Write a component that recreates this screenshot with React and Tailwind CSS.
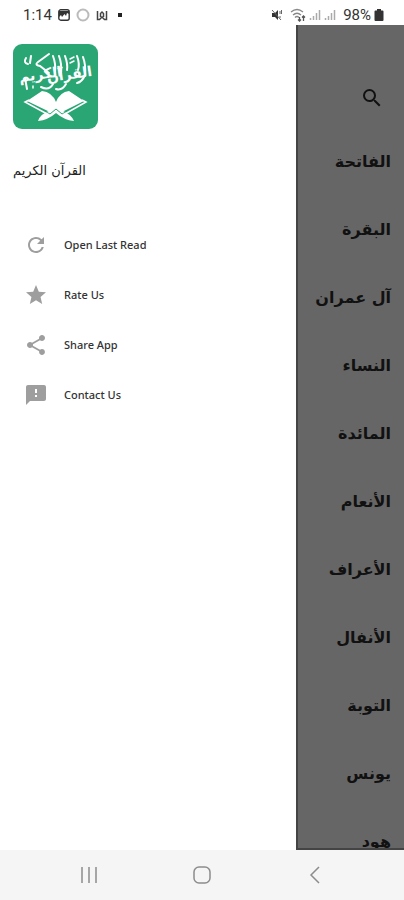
import { MdRefresh, MdStar, MdShare, MdFeedback, MdSearch } from "react-icons/md";

const menu = [
  { label: "Open Last Read", Icon: MdRefresh },
  { label: "Rate Us", Icon: MdStar },
  { label: "Share App", Icon: MdShare },
  { label: "Contact Us", Icon: MdFeedback },
];

const surahs = [
  "الفاتحة",
  "البقرة",
  "آل عمران",
  "النساء",
  "المائدة",
  "الأنعام",
  "الأعراف",
  "الأنفال",
  "التوبة",
  "يونس",
  "هود",
];

function StatusBar() {
  return (
    <header className="flex h-[25px] shrink-0 items-center justify-between bg-white pt-1 pr-5 pl-[23px] text-[#333]">
      <div className="flex items-center gap-[6px]">
        <span className="font-['Roboto'] text-[15px] leading-5">1:14</span>
        <svg className="h-3 w-3" viewBox="0 0 12 12">
          <rect x="0.8" y="0.8" width="10.4" height="10.4" rx="2" fill="none" stroke="#333" strokeWidth="1.4" />
          <path d="M1 2h10v3L9 4 8 7 6.500 5 4 8 3 6 1 8z" fill="#333" />
        </svg>
        <svg className="h-[14px] w-[14px]" viewBox="0 0 14 14">
          <circle cx="7" cy="7" r="5.5" fill="none" stroke="#bbb" strokeWidth="2" />
        </svg>
        <svg className="h-3 w-3" viewBox="0 0 12 12" fill="none" stroke="#444" strokeWidth="1.5">
          <path d="M1.500 2v8.500h2L6 8l2.500 2.500h2V2M4.500 8V4.500L6 3l1.500 1.500V8" />
        </svg>
        <span className="ml-1 h-1 w-1 bg-[#222]" />
      </div>
      <div className="flex items-center gap-[3px]">
        <svg className="h-3 w-3" viewBox="0 0 12 12">
          <path d="M1 4h3l3-3v10L4 8H1z" fill="#333" />
          <path d="M1 1l9 10M9 2v3M10.500 1v4M9 7v2" stroke="#666" fill="none" />
        </svg>
        <svg className="ml-1 h-[14px] w-4" viewBox="0 0 16 14" fill="none" stroke="#888" strokeWidth="1.3">
          <path d="M1 4q6-5 12 0M3 7q4-3.500 8 0M5 9.500q2-2 4 0" />
          <path d="M9.500 9v4M8 11.500l1.500 1.500 1.500-1.500M13.500 13V8M12 9.500L13.500 8 15 9.500" stroke="#555" />
        </svg>
        <svg className="h-3 w-3" viewBox="0 0 12 12" fill="none" stroke="#aaa" strokeWidth="1.500">
          <path d="M1.500 11V9M4.500 11V7M7.500 11V4M10.500 11V1" />
        </svg>
        <svg className="h-3 w-3" viewBox="0 0 12 12" fill="none" stroke="#aaa" strokeWidth="1.500">
          <path d="M1.500 11V9M4.500 11V7M7.500 11V4M10.500 11V1" />
        </svg>
        <span className="ml-1 font-['Roboto'] text-[15px] leading-5">98%</span>
        <svg className="h-3 w-[10px]" viewBox="0 0 10 12">
          <path d="M3 0h4v1.500h1.500q1 0 1 1V11q0 1-1 1h-7q-1 0-1-1V2.500q0-1 1-1H3z" fill="#333" />
        </svg>
      </div>
    </header>
  );
}

function Logo() {
  return (
    <svg className="h-[85px] w-[85px]" viewBox="0 0 85 85" role="img" aria-label="القرآن الكريم">
      <rect width="85" height="85" rx="9" fill="#2aa675" />
      <g fill="#fff" fontFamily="'DejaVu Sans', sans-serif" fontWeight="bold">
        <text x="57" y="35" fontSize="14" textAnchor="middle" transform="rotate(-8 57 35)">القرآن</text>
        <text x="28" y="35" fontSize="14" textAnchor="middle" transform="rotate(-8 28 35)">الكريم</text>
      </g>
      {/* long pen strokes and marks around the words */}
      <g fill="none" stroke="#fff" strokeWidth="2" strokeLinecap="round">
        <path d="M70 13Q73 21 72 31M64 12Q67 20 65 26M52 12Q55 20 54 26M46 12Q49 20 48 29M40 12Q43 20 42 28" />
        <path d="M36 10L25 18Q21 21 27 22L36 29M13 14Q10 19 15 20M18 12L17 19M12 34L14 45M72 31Q69 38 64 39" />
        <path d="M43 45Q49 47 53 40M28 43Q36 47 40 40" />
        <path d="M57 15L61 13M57 19L61 17M20 42v2M76 25v1" strokeWidth="1.500" />
      </g>
      {/* open book on its stand */}
      <g fill="#fff">
        <path d="M14 57L29 47Q39 48 43 58Q47 48 56 47L71 57L47 69L43 66L39 69z" />
        <path d="M25 77Q27 70 38 66L43 63L48 66Q58 70 61 77Q51 76 43 69Q35 76 25 77z" />
      </g>
      <path d="M14 58L37 70L43 65L49 70L71 58" fill="none" stroke="#2aa675" strokeWidth="1" />
      <path d="M16 56L12 58L36 71M69 56L73 58L50 71" fill="none" stroke="#fff" strokeWidth="1.500" />
    </svg>
  );
}

function Drawer() {
  return (
    <aside className="w-[296px] shrink-0 bg-white pt-[19px]">
      <div className="px-[13px]">
        <Logo />
        <h1 dir="rtl" className="mt-8 w-fit font-['DejaVu_Sans',sans-serif] text-[13px] leading-5 text-[#222]">
          القرآن الكريم
        </h1>
      </div>
      <nav className="mt-[39px] flex flex-col">
        {menu.map(({ label, Icon }) => (
          <button key={label} className="flex h-[50px] items-center gap-4 pl-6 text-left">
            <Icon className="h-6 w-6 text-[#9e9e9e]" />
            <span className="font-['Noto_Sans',sans-serif] text-[11px] font-medium text-[#333]">{label}</span>
          </button>
        ))}
      </nav>
    </aside>
  );
}

function SurahList() {
  return (
    <main className="flex min-w-0 flex-1 flex-col overflow-hidden border-b-2 border-l-2 border-[#444] bg-[#666]">
      <div className="flex h-[103px] shrink-0 items-end justify-end pr-5 pb-[18px]">
        <button aria-label="Search">
          <MdSearch className="h-6 w-6 text-[#111]" />
        </button>
      </div>
      <ul dir="rtl" className="min-h-0 flex-1 overflow-hidden">
        {surahs.map((name) => (
          <li
            key={name}
            className="flex h-[68px] items-center pr-[13px] font-['DejaVu_Sans',sans-serif] text-base font-bold text-[#111]"
          >
            {name}
          </li>
        ))}
      </ul>
    </main>
  );
}

function NavBar() {
  return (
    <footer className="flex h-[50px] shrink-0 items-center justify-around bg-[#f5f5f5] px-8 text-[#8c8c8c]">
      <button aria-label="Recent apps">
        <svg className="h-5 w-5" viewBox="0 0 20 20" fill="none" stroke="currentColor" strokeWidth="1.500">
          <path d="M3 2v16M10 2v16M17 2v16" />
        </svg>
      </button>
      <button aria-label="Home">
        <svg className="h-5 w-5" viewBox="0 0 20 20" fill="none" stroke="currentColor" strokeWidth="1.500">
          <rect x="2" y="2" width="16" height="16" rx="5" />
        </svg>
      </button>
      <button aria-label="Back">
        <svg className="h-5 w-5" viewBox="0 0 20 20" fill="none" stroke="currentColor" strokeWidth="1.500">
          <path d="M14 2L6 10l8 8" />
        </svg>
      </button>
    </footer>
  );
}

export default function App() {
  return (
    <div className="flex h-screen flex-col overflow-hidden bg-white">
      <StatusBar />
      <div className="flex min-h-0 flex-1">
        <Drawer />
        <SurahList />
      </div>
      <NavBar />
    </div>
  );
}
